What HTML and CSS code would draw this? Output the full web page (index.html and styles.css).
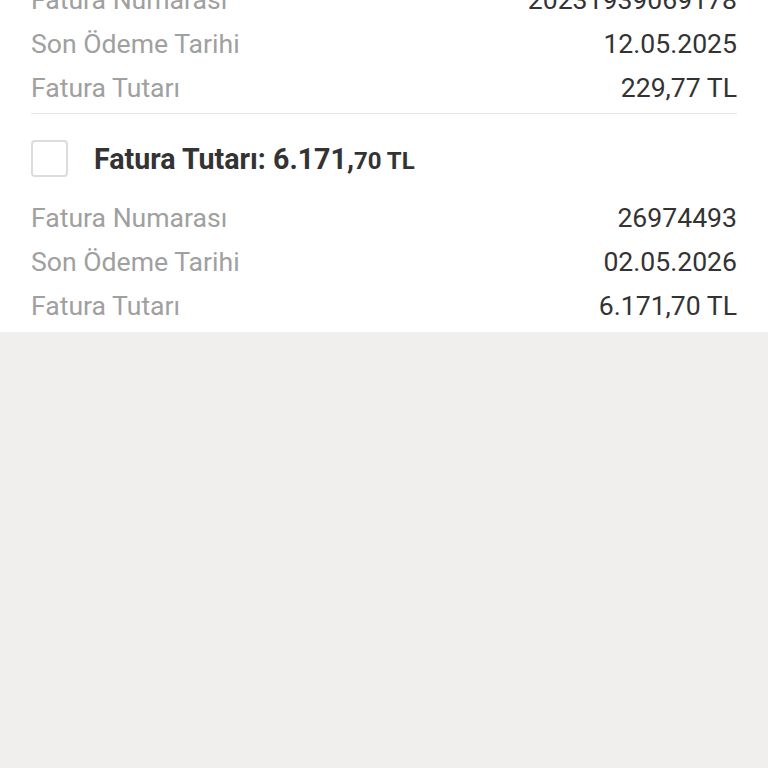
FILE: index.html
```html
<!DOCTYPE html>
<html lang="tr">
<head>
    <meta charset="UTF-8">
    <meta name="viewport" content="width=device-width, initial-scale=1.0">
    <title>Faturalar</title>
    <link rel="stylesheet" href="styles.css">
</head>
<body>
    <div class="invoice-list">
        <div class="invoice first">
            <div class="row"><span class="label">Fatura Numarası</span><span class="value">20231939069178</span></div>
            <div class="row"><span class="label">Son Ödeme Tarihi</span><span class="value">12.05.2025</span></div>
            <div class="row"><span class="label">Fatura Tutarı</span><span class="value">229,77 TL</span></div>
        </div>
        <div class="invoice">
            <div class="invoice-head">
                <span class="checkbox"></span>
                <span class="amount">Fatura Tutarı: 6.171,<small>70 TL</small></span>
            </div>
            <div class="row"><span class="label">Fatura Numarası</span><span class="value">26974493</span></div>
            <div class="row"><span class="label">Son Ödeme Tarihi</span><span class="value">02.05.2026</span></div>
            <div class="row"><span class="label">Fatura Tutarı</span><span class="value">6.171,70 TL</span></div>
        </div>
    </div>
</body>
</html>
```

FILE: styles.css
```css
body {
    margin: 0;
    background: #f0efed;
    font-family: Roboto, 'Noto Sans', sans-serif;
    overflow: hidden;
}
.invoice-list {
    background: white;
    margin-top: -23px;
    padding: 0 31px;
}
.invoice {
    padding-bottom: 5px;
}
.invoice.first {
    padding-bottom: 4px;
    border-bottom: 1px solid #e6e6e6;
}
.row {
    display: flex;
    justify-content: space-between;
    align-items: center;
    height: 44px;
    font-size: 26.6px;
}
.label {
    color: #a0a0a0;
}
.value {
    color: #333;
}
.invoice-head {
    display: flex;
    align-items: center;
    padding: 26px 0 18px;
}
.checkbox {
    width: 33px;
    height: 33px;
    border: 2px solid #dcdcdc;
    border-radius: 4px;
    margin-right: 26px;
}
.amount {
    font-size: 28.6px;
    font-weight: bold;
    color: #333;
}
.amount small {
    font-size: 24px;
}
```
